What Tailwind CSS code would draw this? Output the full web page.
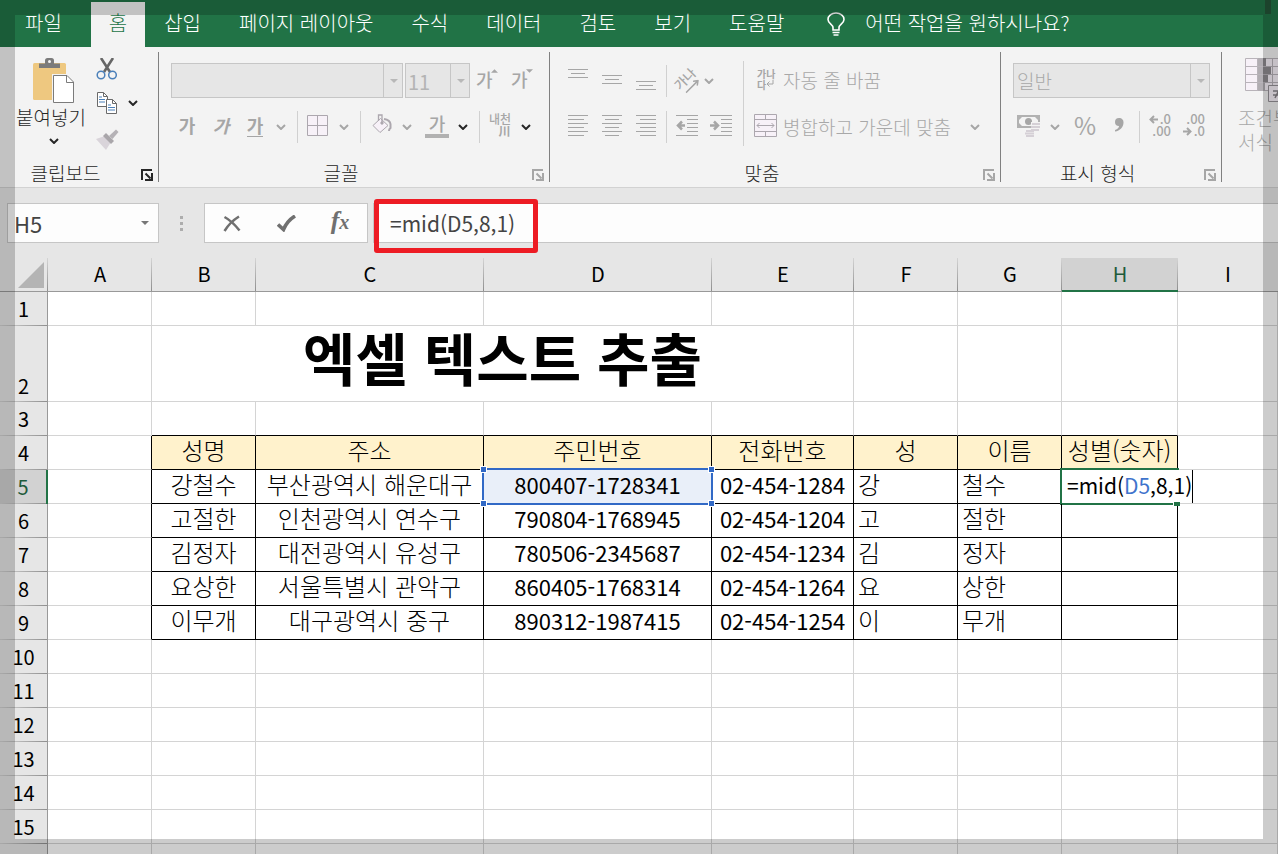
<!DOCTYPE html>
<html lang="ko">
<head>
<meta charset="utf-8">
<meta name="viewport" content="width=device-width, initial-scale=1">
<title>엑셀 텍스트 추출</title>
<script src="https://cdn.jsdelivr.net/npm/@tailwindcss/browser@4"></script>
</head>
<body class="flex h-screen flex-col overflow-hidden bg-[#e6e6e6] font-['Noto_Sans_CJK_KR',sans-serif] text-[#262626]">

<svg class="hidden" aria-hidden="true">
  <symbol id="chev" viewBox="0 0 10 6"><path d="M1 1l4 4 4-4" fill="none" stroke="currentColor" stroke-width="2"/></symbol>
  <symbol id="tri" viewBox="0 0 8 4"><path d="M0 0h8L4 4z" fill="currentColor"/></symbol>
  <symbol id="launch" viewBox="0 0 12 12"><path d="M1 11V1h10" fill="none" stroke="currentColor" stroke-width="2"/><path d="M4.500 4.500l5 5M11 4v7H4" fill="none" stroke="currentColor" stroke-width="2"/></symbol>
</svg>

<header class="relative flex h-[47px] shrink-0 items-end bg-[#217346] pl-[6px] text-xl font-light text-white">
  <nav class="flex h-[45px] shrink-0 whitespace-nowrap [&>a]:pb-[4px]">
    <a href="#" class="mr-[10px] flex items-center px-[19px]">파일</a>
    <a href="#" class="flex items-center bg-[#f3f3f3] px-[18px] text-[#217346]">홈</a>
    <a href="#" class="flex items-center px-[19px]">삽입</a>
    <a href="#" class="flex items-center px-[19px]">페이지 레이아웃</a>
    <a href="#" class="flex items-center px-[19px]">수식</a>
    <a href="#" class="flex items-center px-[19px]">데이터</a>
    <a href="#" class="flex items-center px-[19px]">검토</a>
    <a href="#" class="flex items-center px-[19px]">보기</a>
    <a href="#" class="flex items-center px-[19px]">도움말</a>
  </nav>
  <button class="ml-6 flex h-[45px] items-center gap-5 pb-[4px] whitespace-nowrap">
    <svg class="mt-[3px] h-6 w-[18px]" viewBox="0 0 18 24" fill="none" stroke="currentColor" stroke-width="1.600"><path d="M6 18v-2.500C6 12.500 1 11.500 1 7.500 1 4 4.500 1 9 1s8 3 8 6.500c0 4-5 5-5 8V18z"/><path d="M5.500 20.500h7M6.500 23h5"/></svg>
    어떤 작업을 원하시나요?
  </button>
  <span class="absolute top-0 right-[7px] h-[14px] w-[6px] bg-[#245437]"></span>
</header>

<section class="flex h-[141px] shrink-0 overflow-hidden border-b border-[#d2d2d2] bg-[#f3f3f3] py-[5px] text-[#a6a6a6]" aria-label="리본">

  <div class="flex w-[159px] shrink-0 flex-col border-r border-[#808080] text-[#262626]">
    <div class="flex h-[98px] pl-[15px]">
      <button class="flex w-[72px] flex-col items-center justify-start pt-[6px] text-[19px] leading-6 font-light whitespace-nowrap">
        <svg class="ml-[6px] h-[46px] w-[42px]" viewBox="0 0 42 46"><rect y="5" width="33" height="37" rx="1.500" fill="#eec880"/><path d="M6 10V5.500h6V2.500Q12 0 14.500 0h4Q21 0 21 2.500v3h6V10z" fill="#7b7b7b"/><circle cx="16.500" cy="3.500" r="1.500" fill="#f3f3f3"/><path d="M19 16h15l8 8v21.500H19z" fill="#f3f3f3"/><path d="M20.500 17.500H34l6.500 6.500v20.500h-20z" fill="#fff" stroke="#7b7b7b"/><path d="M33.500 17.500V24.500h7" fill="none" stroke="#7b7b7b"/></svg>
        <span class="mt-[1px]">붙여넣기</span>
        <svg class="mt-[9px] ml-[5px] h-[6px] w-[10px]"><use href="#chev"/></svg>
      </button>
      <div class="flex w-[60px] flex-col pl-[9px]">
        <button class="flex h-8 items-start pt-[6px]" aria-label="잘라내기"><svg class="h-[22px] w-[22px]" viewBox="0 0 22 22"><path d="M5 0l9 14M17 0L8 14" stroke="#666" stroke-width="2.600"/><g fill="none" stroke="#4b80ba" stroke-width="1.500"><circle cx="5" cy="17" r="3.800"/><circle cx="16.500" cy="17" r="3.800"/></g></svg></button>
        <button class="flex h-9 items-center pt-1" aria-label="복사"><svg class="h-[22px] w-[22px]" viewBox="0 0 22 22" fill="#fff" stroke="#6a6a6a"><path d="M1.500.5h6l4 4v10h-10z"/><path d="M7.500.5v4h4" fill="none"/><path d="M3 5h3M3 7.500h6M3 10h6" stroke="#4b80ba"/><path d="M10.500 7.500h6l4 4v10h-10z"/><path d="M16.500 7.500v4h4" fill="none"/><path d="M12 13h3M12 15.500h7M12 18h7" stroke="#4b80ba"/></svg><svg class="ml-[10px] h-[6px] w-[10px]"><use href="#chev"/></svg></button>
        <button class="flex h-8 items-end" aria-label="서식 복사"><svg class="h-[21px] w-[23px]" viewBox="0 0 23 21"><path d="M0 10l9-3 6 6-5 8z" fill="#d9d4da"/><path d="M7 7l3-3 8 8-3 3z" fill="#a9a6aa"/><path d="M13 7l7-6.500 2.500 2.500-6 7z" fill="#b5b2b6"/></svg></button>
      </div>
    </div>
    <div class="mt-auto flex h-[18px] items-center pr-[5px] pl-[15px] text-[19px] font-light"><span class="w-[101px] text-center">클립보드</span><button class="ml-auto" aria-label="클립보드 옵션"><svg class="mt-1 h-3 w-3"><use href="#launch"/></svg></button></div>
  </div>

  <div class="flex w-[391px] shrink-0 flex-col border-r border-[#808080] pt-[11px] pl-3">
    <div class="flex h-[35px] items-center">
      <div class="relative h-[35px] w-[232px]">
        <select aria-label="글꼴" class="h-full w-full appearance-none border border-[#c6c6c6] bg-[#e6e6e6]"><option></option></select>
        <span class="pointer-events-none absolute inset-y-0 right-0 flex w-5 items-center justify-center border-l border-[#c6c6c6] text-[#b8b8b8]"><svg class="h-1 w-2"><use href="#tri"/></svg></span>
      </div>
      <div class="relative ml-[2px] h-[35px] w-[65px]">
        <select aria-label="글꼴 크기" class="h-full w-full appearance-none border border-[#c6c6c6] bg-[#e6e6e6] pt-[2px] pl-[2px] text-xl text-[#b4b4b4]"><option>11</option></select>
        <span class="pointer-events-none absolute inset-y-0 right-0 flex w-5 items-center justify-center border-l border-[#c6c6c6] text-[#b8b8b8]"><svg class="h-1 w-2"><use href="#tri"/></svg></span>
      </div>
      <button class="ml-[6px] flex w-6 items-start pb-1 text-lg leading-6 font-medium" aria-label="글꼴 크기 크게">가<svg class="-ml-[2px] mt-[2px] h-1 w-[7px] shrink-0 rotate-180"><use href="#tri"/></svg></button>
      <button class="ml-[11px] flex w-6 items-start pb-1 text-lg leading-6 font-medium" aria-label="글꼴 크기 작게">가<svg class="-ml-[2px] mt-[2px] h-1 w-[7px] shrink-0"><use href="#tri"/></svg></button>
    </div>
    <div class="mt-[13px] flex h-8 items-center text-lg">
      <button class="w-8 pb-1 text-center font-bold">가</button>
      <button class="w-9 pb-1 text-center font-bold italic">가</button>
      <button class="flex w-8 justify-center pb-[2px]"><span class="border-b border-[#a6a6a6] leading-[21px] font-bold">가</span></button>
      <button class="flex w-5 justify-center" aria-label="밑줄 옵션"><svg class="h-[6px] w-[10px]"><use href="#chev"/></svg></button>
      <span class="ml-[6px] h-8 w-px bg-[#d0d0d0]"></span>
      <button class="ml-px flex w-9 justify-center pb-1" aria-label="테두리"><svg class="h-[21px] w-[21px]" viewBox="0 0 21 21" fill="#f7f1f8" stroke="#aca7ae"><path d="M.5.5h20v20H.5zM10.500.5v20M.5 10.500h20"/></svg></button>
      <button class="flex w-[18px] justify-center" aria-label="테두리 옵션"><svg class="h-[6px] w-[10px]"><use href="#chev"/></svg></button>
      <span class="ml-[7px] h-8 w-px bg-[#d0d0d0]"></span>
      <button class="ml-px flex w-10 justify-center" aria-label="채우기 색"><svg class="mb-[6px] h-5 w-5" viewBox="0 0 20 20" fill="none" stroke="#aca7ae"><path d="M8.500 4.500l7.500 7-8 7-7-7z" fill="#f7f1f8"/><path d="M6.500 7V1h3.500v7.500" stroke-width="1.300"/><circle cx="10" cy="9" r="1.200" fill="#aca7ae"/><path d="M12 5q6 1 6.500 5v4q-1.500 1-1.500 3" stroke-width="2"/></svg></button>
      <button class="flex w-[10px] justify-center" aria-label="채우기 색 옵션"><svg class="h-[6px] w-[10px]"><use href="#chev"/></svg></button>
      <button class="ml-[7px] flex w-9 flex-col items-center pb-1"><span class="leading-[21px] font-medium">가</span><span class="h-1 w-6 bg-[#b1b1b1]"></span></button>
      <button class="flex w-4 justify-center text-[#262626]" aria-label="글꼴 색 옵션"><svg class="h-[6px] w-[10px]"><use href="#chev"/></svg></button>
      <span class="ml-2 h-8 w-px bg-[#d0d0d0]"></span>
      <button class="flex w-10 flex-col items-center pb-1 text-[12px] leading-[12px] font-medium"><span>내천</span><span class="pl-[9px] font-bold">川</span></button>
      <button class="flex w-3 justify-center text-[#262626]" aria-label="윗주 옵션"><svg class="h-[6px] w-[10px]"><use href="#chev"/></svg></button>
    </div>
    <div class="mt-auto flex h-[18px] items-center pr-[5px] text-[19px] font-light"><span class="flex-1 pr-[21px] text-center text-[#262626]">글꼴</span><button aria-label="글꼴 옵션"><svg class="mt-1 h-3 w-3"><use href="#launch"/></svg></button></div>
  </div>

  <div class="flex w-[451px] shrink-0 flex-col border-r border-[#808080]">
    <div class="flex">
      <div class="w-[193px] pt-[11px] pl-[11px]">
        <div class="flex h-[35px] items-center">
          <button class="flex w-[34px] justify-center pb-[2px]" aria-label="위쪽 맞춤"><svg class="h-[21px] w-5" viewBox="0 0 20 21" stroke="currentColor"><path d="M0 .5h20M3 4.500h14M0 8.500h20"/></svg></button>
          <button class="flex w-[34px] justify-center pb-[2px]" aria-label="가운데 맞춤"><svg class="h-[21px] w-5" viewBox="0 0 20 21" stroke="currentColor"><path d="M0 6.500h20M3 10.500h14M0 14.500h20"/></svg></button>
          <button class="flex w-[34px] justify-center pb-[2px]" aria-label="아래쪽 맞춤"><svg class="h-[21px] w-5" viewBox="0 0 20 21" stroke="currentColor"><path d="M0 12.500h20M3 16.500h14M0 20.500h20"/></svg></button>
          <span class="ml-[3px] h-8 w-px bg-[#d0d0d0]"></span>
          <button class="ml-2 flex items-center gap-[5px]" aria-label="방향"><span class="flex h-6 w-6 -rotate-45 flex-col items-center justify-center text-[13px] leading-[14px] font-medium whitespace-nowrap">가나<svg class="h-[7px] w-[18px] shrink-0" viewBox="0 0 18 7" fill="none" stroke="currentColor" stroke-width="1.500"><path d="M0 3.500h16M13 .5l4 3-4 3"/></svg></span><svg class="h-[6px] w-[10px]"><use href="#chev"/></svg></button>
        </div>
        <div class="mt-[13px] flex h-8 items-center pb-[3px]">
          <button class="flex w-[34px] justify-center" aria-label="왼쪽 맞춤"><svg class="h-[21px] w-5" viewBox="0 0 20 21" stroke="currentColor"><path d="M0 .5h20M0 4.500h16M0 8.500h20M0 12.500h16M0 16.500h20M0 20.500h16"/></svg></button>
          <button class="flex w-[34px] justify-center" aria-label="가로 가운데 맞춤"><svg class="h-[21px] w-5" viewBox="0 0 20 21" stroke="currentColor"><path d="M0 .5h20M3 4.500h14M0 8.500h20M3 12.500h14M0 16.500h20M3 20.500h14"/></svg></button>
          <button class="flex w-[34px] justify-center" aria-label="오른쪽 맞춤"><svg class="h-[21px] w-5" viewBox="0 0 20 21" stroke="currentColor"><path d="M0 .5h20M4 4.500h16M0 8.500h20M4 12.500h16M0 16.500h20M4 20.500h16"/></svg></button>
          <span class="mt-[3px] ml-[3px] h-8 w-px bg-[#d0d0d0]"></span>
          <button class="ml-[3px] flex w-[34px] justify-center" aria-label="내어쓰기"><svg class="h-[21px] w-[22px]" viewBox="0 0 22 21" stroke="currentColor" fill="none"><path d="M0 .5h22M11 4.500h11M11 8.500h11M11 12.500h11M11 16.500h11M0 20.500h22"/><path d="M9 10.500H2M6 6.500l-4 4 4 4" stroke-width="2.500"/></svg></button>
          <button class="flex w-[34px] justify-center" aria-label="들여쓰기"><svg class="h-[21px] w-[22px]" viewBox="0 0 22 21" stroke="currentColor" fill="none"><path d="M0 .5h22M11 4.500h11M11 8.500h11M11 12.500h11M11 16.500h11M0 20.500h22"/><path d="M0 10.500h7M4 6.500l4 4-4 4" stroke-width="2.500"/></svg></button>
        </div>
      </div>
      <span class="mt-[9px] h-[85px] w-px bg-[#d0d0d0]"></span>
      <div class="pt-[11px] pl-[10px] text-[19px] font-light whitespace-nowrap text-[#a8a8a8]">
        <button class="flex h-[35px] items-center gap-2">
          <span class="ml-[3px] flex w-[18px] flex-col pb-1 text-[10px] leading-[11px] font-bold text-[#a6a6a6]"><span>가나</span><span class="flex items-center">다<svg class="h-[8px] w-[8px]" viewBox="0 0 8 8" fill="none" stroke="currentColor"><path d="M7 0v4H1M3.500 1.500L1 4l2.500 2.500"/></svg></span></span>
          자동 줄 바꿈
        </button>
        <button class="mt-[13px] flex h-8 items-center gap-[6px]">
          <svg class="mb-[3px] h-[23px] w-[23px]" viewBox="0 0 23 23" fill="#f7f1f8" stroke="#aca7ae"><path d="M.5.5h22v22H.5zM.5 5.500h22M.5 17.500h22M11.500.5v5M11.500 17.500v5"/><path d="M3 11.500h17M5.500 9L3 11.500 5.500 14M17.500 9l2.500 2.500-2.500 2.500" fill="none"/></svg>
          병합하고 가운데 맞춤
          <svg class="ml-[13px] h-[6px] w-[10px] text-[#a6a6a6]"><use href="#chev"/></svg>
        </button>
      </div>
    </div>
    <div class="mt-auto flex h-[18px] items-center pr-[5px] text-[19px] font-light"><span class="flex-1 pr-[9px] text-center text-[#262626]">맞춤</span><button aria-label="맞춤 옵션"><svg class="mt-1 h-3 w-3"><use href="#launch"/></svg></button></div>
  </div>

  <div class="flex w-[221px] shrink-0 flex-col border-r border-[#808080] pt-[11px] pl-3">
    <div class="relative h-[35px] w-[197px]">
      <select aria-label="표시 형식" class="h-full w-full appearance-none border border-[#c6c6c6] bg-[#e6e6e6] pt-[2px] pl-[3px] text-[19px] font-light text-[#a8a8a8]"><option>일반</option></select>
      <span class="pointer-events-none absolute inset-y-0 right-0 flex w-5 items-center justify-center border-l border-[#c6c6c6] text-[#b8b8b8]"><svg class="h-1 w-2"><use href="#tri"/></svg></span>
    </div>
    <div class="mt-[13px] flex h-8 items-center">
      <button class="flex w-8 justify-center" aria-label="회계 표시 형식"><svg class="mb-1 h-[23px] w-6" viewBox="0 0 24 23"><path d="M0 1h23v13H0z" fill="#b1b1b1"/><path d="M2 3h19v9H2z" fill="#f3f3f3"/><path d="M2 3h3L2 6zM21 3h-3l3 3zM2 12h3L2 9z" fill="#b1b1b1"/><circle cx="11.500" cy="7.500" r="3.500" fill="#a6a6a6"/><path d="M14 8h10v11h-6v4H8v-8h6z" fill="#f3f3f3"/><path d="M15 10h8M14 13h9M14 16h8M9 17h8M8 19.500h9M9 22h8" stroke="#d5d0d6" stroke-width="1.800"/></svg></button>
      <button class="flex w-5 justify-center" aria-label="회계 표시 형식 옵션"><svg class="h-[6px] w-[10px]"><use href="#chev"/></svg></button>
      <button class="w-10 pb-1 text-center text-2xl leading-7">%</button>
      <button class="flex w-7 justify-center" aria-label="쉼표 스타일"><svg class="mb-1 h-[14px] w-[10px]" viewBox="0 0 10 14"><path d="M5 0a4.200 4.200 0 0 1 4.500 4.500C9.500 9 6 13 1 13.500v-1.500q4-1.500 4-4A4 4 0 1 1 5 0z" fill="currentColor"/></svg></button>
      <span class="ml-[6px] h-8 w-px bg-[#d0d0d0]"></span>
      <button class="flex w-10 flex-col items-center pb-1 text-[13px] leading-[12px] font-medium" aria-label="자릿수 늘림"><span class="flex w-[22px] items-center justify-between"><svg class="h-[9px] w-[9px]" viewBox="0 0 9 9" fill="none" stroke="currentColor" stroke-width="2"><path d="M9 4.500H2M5 1L1.500 4.500 5 8"/></svg>.0</span><span class="w-[22px] text-right">.00</span></button>
      <button class="flex w-7 flex-col items-center pb-1 text-[13px] leading-[12px] font-medium" aria-label="자릿수 줄임"><span class="w-[22px] text-right">.00</span><span class="flex w-[22px] items-center justify-between"><svg class="h-[9px] w-[9px]" viewBox="0 0 9 9" fill="none" stroke="currentColor" stroke-width="2"><path d="M0 4.500h7M4 1l3.500 3.500L4 8"/></svg>.0</span></button>
    </div>
    <div class="mt-auto flex h-[18px] items-center pr-[5px] text-[19px] font-light"><span class="flex-1 pr-[22px] text-center text-[#262626]">표시 형식</span><button aria-label="표시 형식 옵션"><svg class="mt-1 h-3 w-3"><use href="#launch"/></svg></button></div>
  </div>

  <button class="flex min-w-0 flex-1 flex-col items-start justify-start overflow-hidden pt-[6px] pl-4 text-left text-[19px] leading-6 font-light whitespace-nowrap text-[#a8a8a8]">
    <svg class="mb-[3px] ml-[7px] h-[45px] w-[46px] shrink-0" viewBox="0 0 46 45" stroke="#b8b3b9"><path d="M.5.5h44v32H.5z" fill="#f7f1f8"/><path d="M13 0h7v33h-7z" fill="#b1adb2" stroke="none"/><path d="M18 0h3v8h-3zM18 9h8v7h-8zM18 17h5v7h-5z" fill="#8f8b90" stroke="none"/><path d="M.5 8.500h44M.5 16.500h44M.5 24.500h44M12.500.5v32M27.500.5v32M36.500.5v32"/><path d="M23.500 27.500h18v16h-18z" fill="#f7f1f8" stroke="#979398"/><path d="M28 33h9M28 37h9M35 30l-5 10" stroke="#858186" stroke-width="1.500"/></svg>
    <span>조건부</span><span>서식</span>
  </button>
</section>

<section class="flex h-[70px] shrink-0 items-start pt-[15px] pl-[7px] text-[#444]" aria-label="수식 입력줄">
  <div class="relative h-10 w-[152px] shrink-0">
    <input aria-label="이름 상자" value="H5" class="h-full w-full border border-[#c6c6c6] bg-[#fdfdfd] pl-[6px] text-[22px]">
    <button class="absolute inset-y-0 right-0 flex w-7 items-center justify-center text-[#777]" aria-label="이름 목록"><svg class="h-1 w-2"><use href="#tri"/></svg></button>
  </div>
  <div class="flex h-10 w-[45px] shrink-0 flex-col items-center justify-center gap-[3px]"><span class="h-[3px] w-[3px] bg-[#adadad]"></span><span class="h-[3px] w-[3px] bg-[#adadad]"></span><span class="h-[3px] w-[3px] bg-[#adadad]"></span></div>
  <div class="flex h-10 w-[164px] shrink-0 border border-[#c6c6c6] bg-[#fdfdfd] text-[#707070]">
    <button class="flex flex-1 items-center justify-center" aria-label="취소"><svg class="h-[17px] w-[18px]" viewBox="0 0 18 17" fill="none" stroke="currentColor"><path d="M1.500 2Q9 6 16.500 15.500" stroke-width="2.500"/><path d="M16 1.500Q7 7 1.500 16" stroke-width="2.500"/></svg></button>
    <button class="flex flex-1 items-center justify-center" aria-label="입력"><svg class="h-[17px] w-[19px]" viewBox="0 0 19 17" fill="none" stroke="currentColor"><path d="M1 9.500l5.500 5Q10 6 18 1" stroke-width="3.600"/></svg></button>
    <button class="flex-1 pb-1 text-center font-['Liberation_Serif',serif] text-[26px] leading-8 font-bold italic" aria-label="함수 삽입">f<span class="text-[20px]">x</span></button>
  </div>
  <div class="relative ml-[5px] h-10 min-w-0 flex-1">
    <input aria-label="수식" value="=mid(D5,8,1)" class="h-full w-full border border-r-0 border-[#c6c6c6] bg-[#fdfdfd] pl-[16px] text-[21px]">
    <span class="pointer-events-none absolute -top-[4px] left-[1px] h-[54px] w-[164px] rounded-[3px] border-5 border-[#ed1c24]"></span>
  </div>
</section>

<main class="min-h-0 flex-1 overflow-hidden bg-white">
<table class="w-full table-fixed border-separate border-spacing-0 text-center text-[22px] text-black [&_td]:relative [&_td]:border-r [&_td]:border-b [&_td]:border-[#d4d4d4] [&_td]:p-0 [&_td]:align-top [&_th]:p-0 [&_th]:text-xl [&_th]:font-normal [&_thead_th]:border-b [&_thead_th]:border-[#999] [&_thead_th]:bg-[#e6e6e6] [&_thead_th]:bg-[linear-gradient(to_bottom,#d4d4d4,#8f8f8f)] [&_thead_th]:bg-[length:1px_100%] [&_thead_th]:bg-right [&_thead_th]:bg-no-repeat [&_thead_th]:pb-[2px] [&_tbody_th]:border-r [&_tbody_th]:border-[#999] [&_tbody_th]:bg-[#e6e6e6] [&_tbody_th]:bg-[linear-gradient(to_right,#d4d4d4,#8f8f8f)] [&_tbody_th]:bg-[length:100%_1px] [&_tbody_th]:bg-bottom [&_tbody_th]:bg-no-repeat">
  <colgroup><col class="w-12"><col class="w-[104px]"><col class="w-[104px]"><col class="w-[228px]"><col class="w-[228px]"><col class="w-[142px]"><col class="w-[104px]"><col class="w-[104px]"><col class="w-[116px]"><col></colgroup>
  <thead>
    <tr class="h-[34px]"><th aria-label="모두 선택"><svg class="mt-[2px] ml-[18px] h-[26px] w-[26px]" viewBox="0 0 26 26"><path d="M26 0v26H0z" fill="#b4b4b4"/></svg></th><th scope="col">A</th><th scope="col">B</th><th scope="col">C</th><th scope="col">D</th><th scope="col">E</th><th scope="col">F</th><th scope="col">G</th><th scope="col" class="border-b-2! border-[#217346]! bg-[#d2d2d2]! pb-px! text-[#1e5b3b]">H</th><th scope="col" class="bg-none!">I</th></tr>
  </thead>
  <tbody>
    <tr class="h-[34px]"><th scope="row">1</th><td></td><td></td><td></td><td></td><td></td><td></td><td></td><td></td><td></td></tr>
    <tr class="h-[76px]"><th scope="row" class="pb-[4px]! align-bottom leading-6">2</th><td></td><td colspan="4" class="text-[57px] leading-[60px] font-bold">엑셀 텍스트 추출</td><td></td><td></td><td></td><td></td></tr>
    <tr class="h-[34px] [&>td:nth-child(n+3):nth-child(-n+9)]:border-b-black"><th scope="row">3</th><td></td><td></td><td></td><td></td><td></td><td></td><td></td><td></td><td></td></tr>
    <tr class="h-[34px] text-2xl leading-7 font-light [&>td:nth-child(n+2):nth-child(-n+9)]:border-r-black [&>td:nth-child(n+3):nth-child(-n+9)]:border-b-black [&>td:nth-child(n+3):nth-child(-n+9)]:bg-[#fff2cc]"><th scope="row">4</th><td></td><td>성명</td><td>주소</td><td>주민번호</td><td>전화번호</td><td>성</td><td>이름</td><td class="whitespace-nowrap">성별(숫자)</td><td></td></tr>
    <tr class="h-[34px] leading-7 [&>td:nth-child(n+2):nth-child(-n+9)]:border-r-black [&>td:nth-child(n+3):nth-child(-n+9)]:border-b-black"><th scope="row" class="border-r-2! border-[#217346]! bg-[#d2d2d2]! text-[#1e5b3b]">5</th><td></td><td class="text-2xl leading-7 font-light">강철수</td><td class="text-2xl leading-7 font-light">부산광역시 해운대구</td>
      <td class="bg-[#e9eff9]">800407-1728341
        <span class="pointer-events-none absolute -inset-[2px] z-10 border-2 border-[#3169c6]"><i class="absolute -top-1 -left-1 h-[7px] w-[7px] border border-white bg-[#3169c6]"></i><i class="absolute -top-1 -right-1 h-[7px] w-[7px] border border-white bg-[#3169c6]"></i><i class="absolute -bottom-1 -left-1 h-[7px] w-[7px] border border-white bg-[#3169c6]"></i><i class="absolute -right-1 -bottom-1 h-[7px] w-[7px] border border-white bg-[#3169c6]"></i></span></td>
      <td>02-454-1284</td><td class="pl-1! text-left text-2xl leading-7 font-light">강</td><td class="pl-1! text-left text-2xl leading-7 font-light">철수</td>
      <td><span class="pointer-events-none absolute -inset-[2px] border-2 border-[#217346]"></span><div contenteditable="true" role="textbox" aria-label="H5 편집" class="absolute top-0 left-0 z-10 h-[33px] border-r border-black bg-white pl-[5px] text-left text-[21px] leading-[31px] whitespace-nowrap">=mid(<span class="text-[#3f74cc]">D5</span>,8,1)</div><i class="absolute -right-[3px] -bottom-[3px] z-20 h-[5px] w-[7px] border-t border-l border-white bg-[#217346]"></i></td><td></td></tr>
    <tr class="h-[34px] leading-7 [&>td:nth-child(n+2):nth-child(-n+9)]:border-r-black [&>td:nth-child(n+3):nth-child(-n+9)]:border-b-black"><th scope="row">6</th><td></td><td class="text-2xl leading-7 font-light">고절한</td><td class="text-2xl leading-7 font-light">인천광역시 연수구</td><td>790804-1768945</td><td>02-454-1204</td><td class="pl-1! text-left text-2xl leading-7 font-light">고</td><td class="pl-1! text-left text-2xl leading-7 font-light">절한</td><td></td><td></td></tr>
    <tr class="h-[34px] leading-7 [&>td:nth-child(n+2):nth-child(-n+9)]:border-r-black [&>td:nth-child(n+3):nth-child(-n+9)]:border-b-black"><th scope="row">7</th><td></td><td class="text-2xl leading-7 font-light">김정자</td><td class="text-2xl leading-7 font-light">대전광역시 유성구</td><td>780506-2345687</td><td>02-454-1234</td><td class="pl-1! text-left text-2xl leading-7 font-light">김</td><td class="pl-1! text-left text-2xl leading-7 font-light">정자</td><td></td><td></td></tr>
    <tr class="h-[34px] leading-7 [&>td:nth-child(n+2):nth-child(-n+9)]:border-r-black [&>td:nth-child(n+3):nth-child(-n+9)]:border-b-black"><th scope="row">8</th><td></td><td class="text-2xl leading-7 font-light">요상한</td><td class="text-2xl leading-7 font-light">서울특별시 관악구</td><td>860405-1768314</td><td>02-454-1264</td><td class="pl-1! text-left text-2xl leading-7 font-light">요</td><td class="pl-1! text-left text-2xl leading-7 font-light">상한</td><td></td><td></td></tr>
    <tr class="h-[34px] leading-7 [&>td:nth-child(n+2):nth-child(-n+9)]:border-r-black [&>td:nth-child(n+3):nth-child(-n+9)]:border-b-black"><th scope="row">9</th><td></td><td class="text-2xl leading-7 font-light">이무개</td><td class="text-2xl leading-7 font-light">대구광역시 중구</td><td>890312-1987415</td><td>02-454-1254</td><td class="pl-1! text-left text-2xl leading-7 font-light">이</td><td class="pl-1! text-left text-2xl leading-7 font-light">무개</td><td></td><td></td></tr>
    <tr class="h-[34px]"><th scope="row">10</th><td></td><td></td><td></td><td></td><td></td><td></td><td></td><td></td><td></td></tr>
    <tr class="h-[34px]"><th scope="row">11</th><td></td><td></td><td></td><td></td><td></td><td></td><td></td><td></td><td></td></tr>
    <tr class="h-[34px]"><th scope="row">12</th><td></td><td></td><td></td><td></td><td></td><td></td><td></td><td></td><td></td></tr>
    <tr class="h-[34px]"><th scope="row">13</th><td></td><td></td><td></td><td></td><td></td><td></td><td></td><td></td><td></td></tr>
    <tr class="h-[34px]"><th scope="row">14</th><td></td><td></td><td></td><td></td><td></td><td></td><td></td><td></td><td></td></tr>
    <tr class="h-[34px]"><th scope="row">15</th><td></td><td></td><td></td><td></td><td></td><td></td><td></td><td></td><td></td></tr>
    <tr class="h-[34px]"><th scope="row"></th><td></td><td></td><td></td><td></td><td></td><td></td><td></td><td></td><td></td></tr>
  </tbody>
</table>
</main>

<div class="pointer-events-none fixed inset-0 z-50 border-[15px] border-black/20"></div>
</body>
</html>
